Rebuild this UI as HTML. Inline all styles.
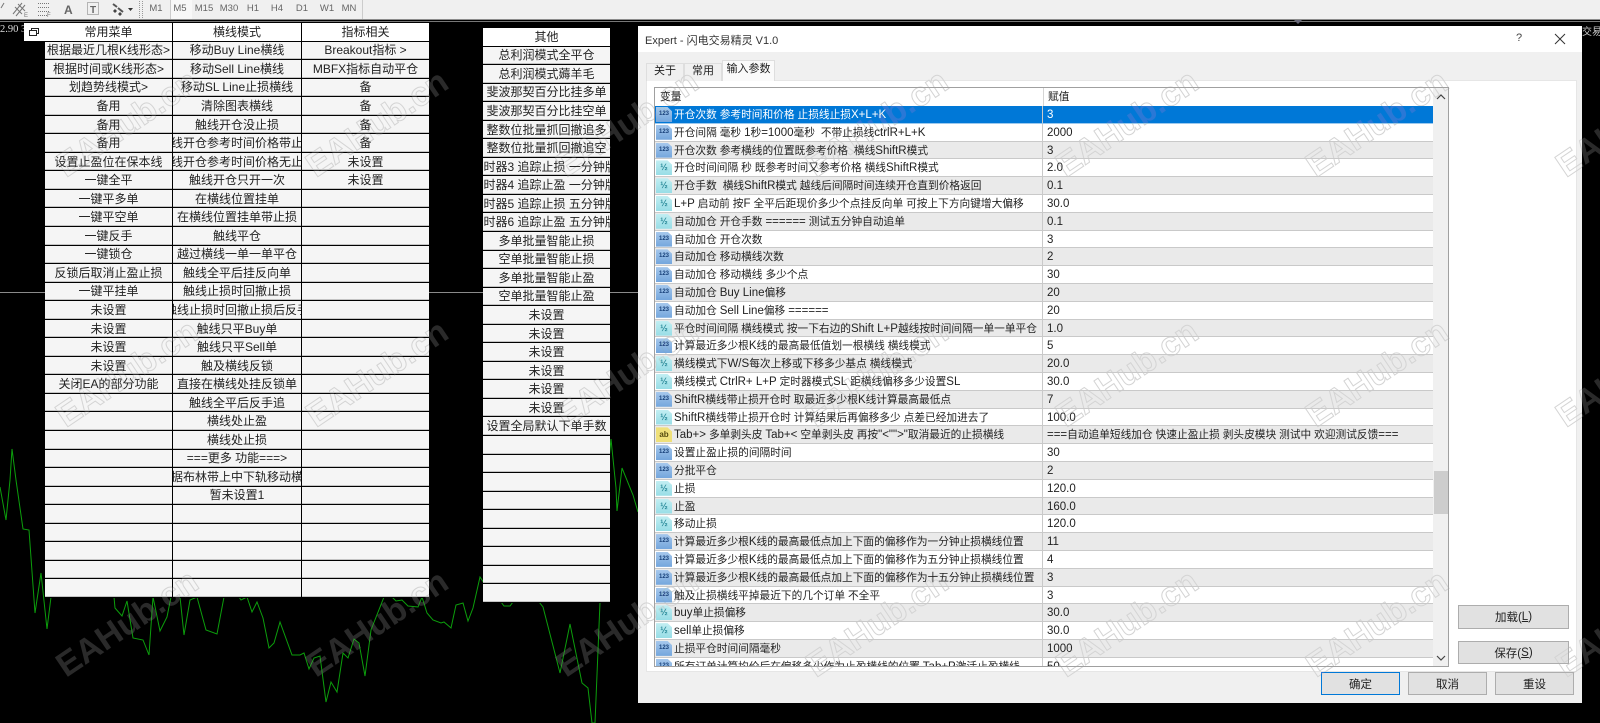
<!DOCTYPE html>
<html lang="zh"><head><meta charset="utf-8"><title>Expert</title>
<style>
html,body{margin:0;padding:0;background:#000;width:1600px;height:723px;overflow:hidden}
#w{position:relative;width:1600px;height:723px;overflow:hidden;background:#000;font-family:"Liberation Sans","Noto Sans CJK SC",sans-serif;color:#222;filter:blur(.3px)}
.a{position:absolute}
#tb{left:0;top:0;width:1600px;height:19px;background:#f0f0f0}
.per{position:absolute;top:3px;font-size:9.5px;color:#666;transform:translateX(-50%)}
.t{position:absolute;display:grid;grid-auto-rows:18.55px;background:#000;column-gap:1px;font-size:12px;color:#222}
.t b{font-weight:400;background:#f5f5f5;border-bottom:1px solid #c4c4c4;margin-bottom:1px;overflow:hidden;display:flex;justify-content:center;align-items:center;white-space:nowrap;box-sizing:border-box}
.t b.h{background:#fff;border-bottom-color:#fff}
.t b.l{justify-content:flex-start}
.t b.l span{margin-left:-11.5px}
#dlg{left:638px;top:26px;width:944px;height:677px;background:#f0f0f0}
.tab{position:absolute;box-sizing:border-box;font-size:11px;text-align:center;background:#f0f0f0;border:1px solid #dedede;border-bottom:0}
#list{left:654px;top:87px;width:795px;height:580px;background:#fff;border:1px solid #a0a0a0;box-sizing:border-box;overflow:hidden;font-size:10.7px}
#rows{position:absolute;left:0;top:18px;width:778px;display:grid;grid-auto-rows:17.8px}
.r{display:flex;background:#fff;border-bottom:1px solid #c9c9c9;box-sizing:border-box;line-height:19px;white-space:nowrap;overflow:hidden;position:relative}
.r.g{background:#eaeaea}
.r.s{background:#0078d7;color:#fff;border-bottom-color:#9cc9ee}
.r span{display:block;box-sizing:border-box;overflow:hidden}
.r .k{width:388px;padding-left:19px;border-right:1px solid #c9c9c9}
.r .v{padding-left:4px;flex:1;font-size:10.7px}
.r i{font-style:normal;font-size:11.5px}
.r s{position:absolute;left:1px;top:1px;width:16px;height:15px;text-decoration:none;font:bold 6px/15px "Liberation Sans",sans-serif;text-align:center;clip-path:polygon(0 0,72% 0,100% 28%,100% 100%,0 100%)}
s.n{background:linear-gradient(#a6c8ec,#74a6dc);color:#163f78}
s.d{background:linear-gradient(#c2eef2,#98dde6);color:#2a8a9a;font-size:9px}
s.y{background:#efe07a;color:#554b10;font-size:8px}
.btn{position:absolute;box-sizing:border-box;background:#e1e1e1;border:1px solid #adadad;font-size:11.5px;display:flex;align-items:center;justify-content:center;color:#222}
#wm1,#wm2{position:absolute;left:0;top:0;pointer-events:none}
#wm1{mix-blend-mode:lighten}#wm2{mix-blend-mode:darken}
#wm1 text{font:bold 34px "Liberation Sans",sans-serif;fill:#2a2a2a}
#wm2 text{font:bold 34px "Liberation Sans",sans-serif;fill:none;stroke:#d4d4d4;stroke-width:1}
</style></head><body><div id="w">

<svg class="a" style="left:0;top:0" width="1600" height="723">
<line x1="0" y1="292.5" x2="640" y2="292.5" stroke="#8a8a8a"/>
<polyline fill="none" stroke="#0c9e0c" stroke-width="1" points="0,487 6,520 10,480 12,449 16,480 23,529 29,530 35,613 41,573 47,629 51,597 114,597 115,608 122,616 127,601 133,638 143,640 149,655 153,597 160,631 167,617 171,597 180,597 184,635 190,600 197,597 206,630 217,634 224,597 239,597 241,600 247,597 252,612 257,602 263,618 269,648 274,643 280,622 292,655 300,655 304,653 309,669 314,658 320,656 326,702 331,682 337,692 343,653 348,658 354,639 359,643 365,676 371,630 384,597 392,597 396,601 402,600 408,606 418,607 422,597 427,613 433,620 441,623 444,622 451,628 456,605 463,603 468,621 473,608 480,577 484,583 495,600 501,602 504,606 510,606 513,602 539,602 543,607 560,673 570,624 582,683 588,688 592,723 595,723 600,602 605,500 611,439 616,488 617,511 622,468 633,495 638,512"/>
</svg>

<div class="a" id="tb"></div>
<div class="a" style="left:170px;top:0;width:22px;height:19px;background:#f8f8f8"></div>
<div class="a" style="left:0;top:19px;width:1600px;height:1px;background:#8c8c8c"></div>
<div class="a" style="left:0;top:21px;width:1600px;height:1px;background:#777"></div>
<div class="a" style="left:1294px;top:20px;width:0;height:0;border:4px solid transparent;border-top:4px solid #667"></div>
<svg class="a" style="left:0;top:0" width="370" height="19" fill="none" stroke="#777">
<path d="M1 8L4 3"/>
<path d="M13 14L22 3M16 16L25 5M15 7L22 14M18 4L25 11"/>
<text x="24" y="17" font-family="Liberation Sans" font-size="6" fill="#777" stroke="none">E</text>
<path d="M38 3.500H50M38 7.500H50M38 11.500H50M38 15.500H47" stroke-dasharray="1 1"/>
<text x="47" y="17" font-family="Liberation Sans" font-size="6" fill="#777" stroke="none">F</text>
<text x="64" y="14" font-family="Liberation Sans" font-size="12" font-weight="bold" fill="#666" stroke="none">A</text>
<rect x="87.500" y="2.500" width="11" height="12" stroke-dasharray="1 1"/>
<text x="90" y="13" font-family="Liberation Sans" font-size="10" font-weight="bold" fill="#666" stroke="none">T</text>
<path d="M113 4L117 7M118 8L123 12" stroke="#555" stroke-width="2"/>
<path d="M115 9l2 2-2 2-2-2zM120 12l2 2-2 2-2-2z" fill="#444" stroke="none"/>
<path d="M128 8h5l-2.500 3z" fill="#333" stroke="none"/>
<path d="M139.500 1v17M142.500 1v17" stroke="#999" stroke-dasharray="1 1"/><path d="M170.500 0v19M362.500 0v19" stroke="#ccc"/>
</svg>
<span class="per" style="left:156px">M1</span><span class="per" style="left:180px">M5</span><span class="per" style="left:204px">M15</span><span class="per" style="left:229px">M30</span><span class="per" style="left:253px">H1</span><span class="per" style="left:277px">H4</span><span class="per" style="left:302px">D1</span><span class="per" style="left:327px">W1</span><span class="per" style="left:349px">MN</span>

<div class="a" style="left:0;top:23.500px;color:#ddd;font:10.500px 'Liberation Serif',serif;white-space:nowrap;width:24px;overflow:hidden">2.90 3.</div>
<div class="a" style="left:24px;top:23px;width:21px;height:18px;background:#fff"></div>
<svg class="a" style="left:28px;top:27px" width="12" height="10" fill="none" stroke="#222"><path d="M3.500 3.500V1.500H10.500V6.500H8.500M1.500 3.500H8.500V8.500H1.500Z"/></svg>
<div class="a" style="left:1582px;top:23px;color:#ccc;font-size:10px;white-space:nowrap;width:18px;overflow:hidden">交易</div>

<div class="t" style="left:45px;top:23px;width:384px;grid-template-columns:127px 128px 127px">
<b class="h">常用菜单</b><b class="h">横线模式</b><b class="h">指标相关</b>
<b>根据最近几根K线形态&gt;</b><b>移动Buy Line横线</b><b>Breakout指标 &gt;</b>
<b>根据时间或K线形态&gt;</b><b>移动Sell Line横线</b><b>MBFX指标自动平仓</b>
<b>划趋势线模式&gt;</b><b>移动SL Line止损横线</b><b>备</b>
<b>备用</b><b>清除图表横线</b><b>备</b>
<b>备用</b><b>触线开仓没止损</b><b>备</b>
<b>备用</b><b>触线开仓参考时间价格带止损</b><b>备</b>
<b>设置止盈位在保本线</b><b>触线开仓参考时间价格无止损</b><b>未设置</b>
<b>一键全平</b><b>触线开仓只开一次</b><b>未设置</b>
<b>一键平多单</b><b>在横线位置挂单</b><b></b>
<b>一键平空单</b><b>在横线位置挂单带止损</b><b></b>
<b>一键反手</b><b>触线平仓</b><b></b>
<b>一键锁仓</b><b>越过横线一单一单平仓</b><b></b>
<b>反锁后取消止盈止损</b><b>触线全平后挂反向单</b><b></b>
<b>一键平挂单</b><b>触线止损时回撤止损</b><b></b>
<b>未设置</b><b>触线止损时回撤止损后反手</b><b></b>
<b>未设置</b><b>触线只平Buy单</b><b></b>
<b>未设置</b><b>触线只平Sell单</b><b></b>
<b>未设置</b><b>触及横线反锁</b><b></b>
<b>关闭EA的部分功能</b><b>直接在横线处挂反锁单</b><b></b>
<b></b><b>触线全平后反手追</b><b></b>
<b></b><b>横线处止盈</b><b></b>
<b></b><b>横线处止损</b><b></b>
<b></b><b>===更多 功能===&gt;</b><b></b>
<b></b><b>根据布林带上中下轨移动横线</b><b></b>
<b></b><b>暂未设置1</b><b></b>
<b></b><b></b><b></b><b></b><b></b><b></b><b></b><b></b><b></b><b></b><b></b><b></b><b></b><b></b><b></b>
</div>

<div class="t" style="left:483px;top:28px;width:127px;grid-template-columns:127px">
<b class="h">其他</b><b>总利润模式全平仓</b><b>总利润模式薅羊毛</b><b>斐波那契百分比挂多单</b><b>斐波那契百分比挂空单</b><b>整数位批量抓回撤追多</b><b>整数位批量抓回撤追空</b><b class="l"><span>定时器3 追踪止损 一分钟版本</span></b><b class="l"><span>定时器4 追踪止盈 一分钟版本</span></b><b class="l"><span>定时器5 追踪止损 五分钟版本</span></b><b class="l"><span>定时器6 追踪止盈 五分钟版本</span></b><b>多单批量智能止损</b><b>空单批量智能止损</b><b>多单批量智能止盈</b><b>空单批量智能止盈</b><b>未设置</b><b>未设置</b><b>未设置</b><b>未设置</b><b>未设置</b><b>未设置</b><b>设置全局默认下单手数</b><b></b><b></b><b></b><b></b><b></b><b></b><b></b><b></b><b></b>
</div>

<div class="a" id="dlg"></div>
<div class="a" style="left:638px;top:26px;width:944px;height:26px;background:#fff"></div>
<div class="a" style="left:645px;top:32px;font-size:11px;color:#333;white-space:nowrap">Expert - 闪电交易精灵 V1.0</div>
<div class="a" style="left:1516px;top:32px;font-size:11px;color:#444">?</div>
<svg class="a" style="left:1554px;top:33px" width="12" height="12" stroke="#333"><path d="M1 1L11 11M11 1L1 11"/></svg>

<div class="a" style="left:646px;top:80px;width:931px;height:592px;background:#fff;border:1px solid #e6e6e6;box-sizing:border-box"></div>
<div class="tab" style="left:646px;top:63px;width:38px;height:18px;line-height:14px">关于</div>
<div class="tab" style="left:684px;top:63px;width:38px;height:18px;line-height:14px">常用</div>
<div class="tab" style="left:722px;top:60px;width:53px;height:21px;line-height:17px;background:#fafafa">输入参数</div>

<div class="a" id="list">
<div class="a" style="left:5px;top:0;line-height:18px">变量</div>
<div class="a" style="left:388px;top:0;width:1px;height:18px;background:#d5d5d5"></div>
<div class="a" style="left:393px;top:0;line-height:18px">赋值</div>
<div id="rows">
<div class="r s"><s class="n">123</s><span class="k">开仓次数 参考时间和价格 止损线止损<i>X+L+K</i></span><span class="v"><i>3</i></span></div>
<div class="r"><s class="n">123</s><span class="k">开仓间隔 毫秒 <i>1</i>秒<i>=1000</i>毫秒 &nbsp;不带止损线<i>ctrlR+L+K</i></span><span class="v"><i>2000</i></span></div>
<div class="r g"><s class="n">123</s><span class="k">开仓次数 参考横线的位置既参考价格 &nbsp;横线<i>ShiftR</i>模式</span><span class="v"><i>3</i></span></div>
<div class="r"><s class="d">½</s><span class="k">开仓时间间隔 秒 既参考时间又参考价格 横线<i>ShiftR</i>模式</span><span class="v"><i>2.0</i></span></div>
<div class="r g"><s class="d">½</s><span class="k">开仓手数 &nbsp;横线<i>ShiftR</i>模式 越线后间隔时间连续开仓直到价格返回</span><span class="v"><i>0.1</i></span></div>
<div class="r"><s class="d">½</s><span class="k"><i>L+P</i> 启动前 按<i>F</i> 全平后距现价多少个点挂反向单 可按上下方向键增大偏移</span><span class="v"><i>30.0</i></span></div>
<div class="r g"><s class="d">½</s><span class="k">自动加仓 开仓手数 <i>======</i> 测试五分钟自动追单</span><span class="v"><i>0.1</i></span></div>
<div class="r"><s class="n">123</s><span class="k">自动加仓 开仓次数</span><span class="v"><i>3</i></span></div>
<div class="r g"><s class="n">123</s><span class="k">自动加仓 移动横线次数</span><span class="v"><i>2</i></span></div>
<div class="r"><s class="n">123</s><span class="k">自动加仓 移动横线 多少个点</span><span class="v"><i>30</i></span></div>
<div class="r g"><s class="n">123</s><span class="k">自动加仓 <i>Buy Line</i>偏移</span><span class="v"><i>20</i></span></div>
<div class="r"><s class="n">123</s><span class="k">自动加仓 <i>Sell Line</i>偏移 <i>======</i></span><span class="v"><i>20</i></span></div>
<div class="r g"><s class="d">½</s><span class="k">平仓时间间隔 横线模式 按一下右边的<i>Shift L+P</i>越线按时间间隔一单一单平仓</span><span class="v"><i>1.0</i></span></div>
<div class="r"><s class="n">123</s><span class="k">计算最近多少根<i>K</i>线的最高最低值划一根横线 横线模式</span><span class="v"><i>5</i></span></div>
<div class="r g"><s class="d">½</s><span class="k">横线模式下<i>W/S</i>每次上移或下移多少基点 横线模式</span><span class="v"><i>20.0</i></span></div>
<div class="r"><s class="d">½</s><span class="k">横线模式 <i>CtrlR+ L+P</i> 定时器模式<i>SL</i> 距横线偏移多少设置<i>SL</i></span><span class="v"><i>30.0</i></span></div>
<div class="r g"><s class="n">123</s><span class="k"><i>ShiftR</i>横线带止损开仓时 取最近多少根<i>K</i>线计算最高最低点</span><span class="v"><i>7</i></span></div>
<div class="r"><s class="d">½</s><span class="k"><i>ShiftR</i>横线带止损开仓时 计算结果后再偏移多少 点差已经加进去了</span><span class="v"><i>100.0</i></span></div>
<div class="r g"><s class="y">ab</s><span class="k"><i>Tab+&gt;</i> 多单剥头皮 <i>Tab+&lt;</i> 空单剥头皮 再按<i>"&lt;""&gt;"</i>取消最近的止损横线</span><span class="v"><i>===</i>自动追单短线加仓 快速止盈止损 剥头皮模块 测试中 欢迎测试反馈<i>===</i></span></div>
<div class="r"><s class="n">123</s><span class="k">设置止盈止损的间隔时间</span><span class="v"><i>30</i></span></div>
<div class="r g"><s class="n">123</s><span class="k">分批平仓</span><span class="v"><i>2</i></span></div>
<div class="r"><s class="d">½</s><span class="k">止损</span><span class="v"><i>120.0</i></span></div>
<div class="r g"><s class="d">½</s><span class="k">止盈</span><span class="v"><i>160.0</i></span></div>
<div class="r"><s class="d">½</s><span class="k">移动止损</span><span class="v"><i>120.0</i></span></div>
<div class="r g"><s class="n">123</s><span class="k">计算最近多少根<i>K</i>线的最高最低点加上下面的偏移作为一分钟止损横线位置</span><span class="v"><i>11</i></span></div>
<div class="r"><s class="n">123</s><span class="k">计算最近多少根<i>K</i>线的最高最低点加上下面的偏移作为五分钟止损横线位置</span><span class="v"><i>4</i></span></div>
<div class="r g"><s class="n">123</s><span class="k">计算最近多少根<i>K</i>线的最高最低点加上下面的偏移作为十五分钟止损横线位置</span><span class="v"><i>3</i></span></div>
<div class="r"><s class="n">123</s><span class="k">触及止损横线平掉最近下的几个订单 不全平</span><span class="v"><i>3</i></span></div>
<div class="r g"><s class="d">½</s><span class="k"><i>buy</i>单止损偏移</span><span class="v"><i>30.0</i></span></div>
<div class="r"><s class="d">½</s><span class="k"><i>sell</i>单止损偏移</span><span class="v"><i>30.0</i></span></div>
<div class="r g"><s class="n">123</s><span class="k">止损平仓时间间隔毫秒</span><span class="v"><i>1000</i></span></div>
<div class="r"><s class="n">123</s><span class="k">所有订单计算均价后在偏移多少作为止盈横线的位置 <i>Tab+P</i>激活止盈横线</span><span class="v"><i>50</i></span></div>
</div>
<div class="a" style="left:778px;top:0;width:15px;height:578px;background:#f0f0f0"></div>
<div class="a" style="left:779px;top:383px;width:14px;height:43px;background:#cdcdcd"></div>
<svg class="a" style="left:781px;top:5px" width="10" height="8" fill="none" stroke="#444" stroke-width="1.200"><path d="M1 6L5 2L9 6"/></svg>
<svg class="a" style="left:781px;top:566px" width="10" height="8" fill="none" stroke="#444" stroke-width="1.200"><path d="M1 2L5 6L9 2"/></svg>
</div>

<div class="btn" style="left:1458px;top:605px;width:111px;height:24px">加载(<u>L</u>)</div>
<div class="btn" style="left:1458px;top:641px;width:111px;height:23px">保存(<u>S</u>)</div>
<div class="btn" style="left:1321px;top:672px;width:79px;height:23px;border:1.500px solid #0078d7">确定</div>
<div class="btn" style="left:1408px;top:672px;width:79px;height:23px">取消</div>
<div class="btn" style="left:1495px;top:672px;width:79px;height:23px">重设</div>

<svg id="wm1" width="1600" height="723">
<text transform="translate(66 178) rotate(-34)">EAHub.cn</text><text transform="translate(316 178) rotate(-34)">EAHub.cn</text><text transform="translate(566 178) rotate(-34)">EAHub.cn</text><text transform="translate(816 178) rotate(-34)">EAHub.cn</text><text transform="translate(1066 178) rotate(-34)">EAHub.cn</text><text transform="translate(1316 178) rotate(-34)">EAHub.cn</text><text transform="translate(1566 178) rotate(-34)">EAHub.cn</text>
<text transform="translate(66 428) rotate(-34)">EAHub.cn</text><text transform="translate(316 428) rotate(-34)">EAHub.cn</text><text transform="translate(566 428) rotate(-34)">EAHub.cn</text><text transform="translate(816 428) rotate(-34)">EAHub.cn</text><text transform="translate(1066 428) rotate(-34)">EAHub.cn</text><text transform="translate(1316 428) rotate(-34)">EAHub.cn</text><text transform="translate(1566 428) rotate(-34)">EAHub.cn</text>
<text transform="translate(66 678) rotate(-34)">EAHub.cn</text><text transform="translate(316 678) rotate(-34)">EAHub.cn</text><text transform="translate(566 678) rotate(-34)">EAHub.cn</text><text transform="translate(816 678) rotate(-34)">EAHub.cn</text><text transform="translate(1066 678) rotate(-34)">EAHub.cn</text><text transform="translate(1316 678) rotate(-34)">EAHub.cn</text><text transform="translate(1566 678) rotate(-34)">EAHub.cn</text>
</svg>
<svg id="wm2" width="1600" height="723">
<text transform="translate(66 178) rotate(-34)">EAHub.cn</text><text transform="translate(316 178) rotate(-34)">EAHub.cn</text><text transform="translate(566 178) rotate(-34)">EAHub.cn</text><text transform="translate(816 178) rotate(-34)">EAHub.cn</text><text transform="translate(1066 178) rotate(-34)">EAHub.cn</text><text transform="translate(1316 178) rotate(-34)">EAHub.cn</text><text transform="translate(1566 178) rotate(-34)">EAHub.cn</text>
<text transform="translate(66 428) rotate(-34)">EAHub.cn</text><text transform="translate(316 428) rotate(-34)">EAHub.cn</text><text transform="translate(566 428) rotate(-34)">EAHub.cn</text><text transform="translate(816 428) rotate(-34)">EAHub.cn</text><text transform="translate(1066 428) rotate(-34)">EAHub.cn</text><text transform="translate(1316 428) rotate(-34)">EAHub.cn</text><text transform="translate(1566 428) rotate(-34)">EAHub.cn</text>
<text transform="translate(66 678) rotate(-34)">EAHub.cn</text><text transform="translate(316 678) rotate(-34)">EAHub.cn</text><text transform="translate(566 678) rotate(-34)">EAHub.cn</text><text transform="translate(816 678) rotate(-34)">EAHub.cn</text><text transform="translate(1066 678) rotate(-34)">EAHub.cn</text><text transform="translate(1316 678) rotate(-34)">EAHub.cn</text><text transform="translate(1566 678) rotate(-34)">EAHub.cn</text>
</svg>
</div></body></html>
